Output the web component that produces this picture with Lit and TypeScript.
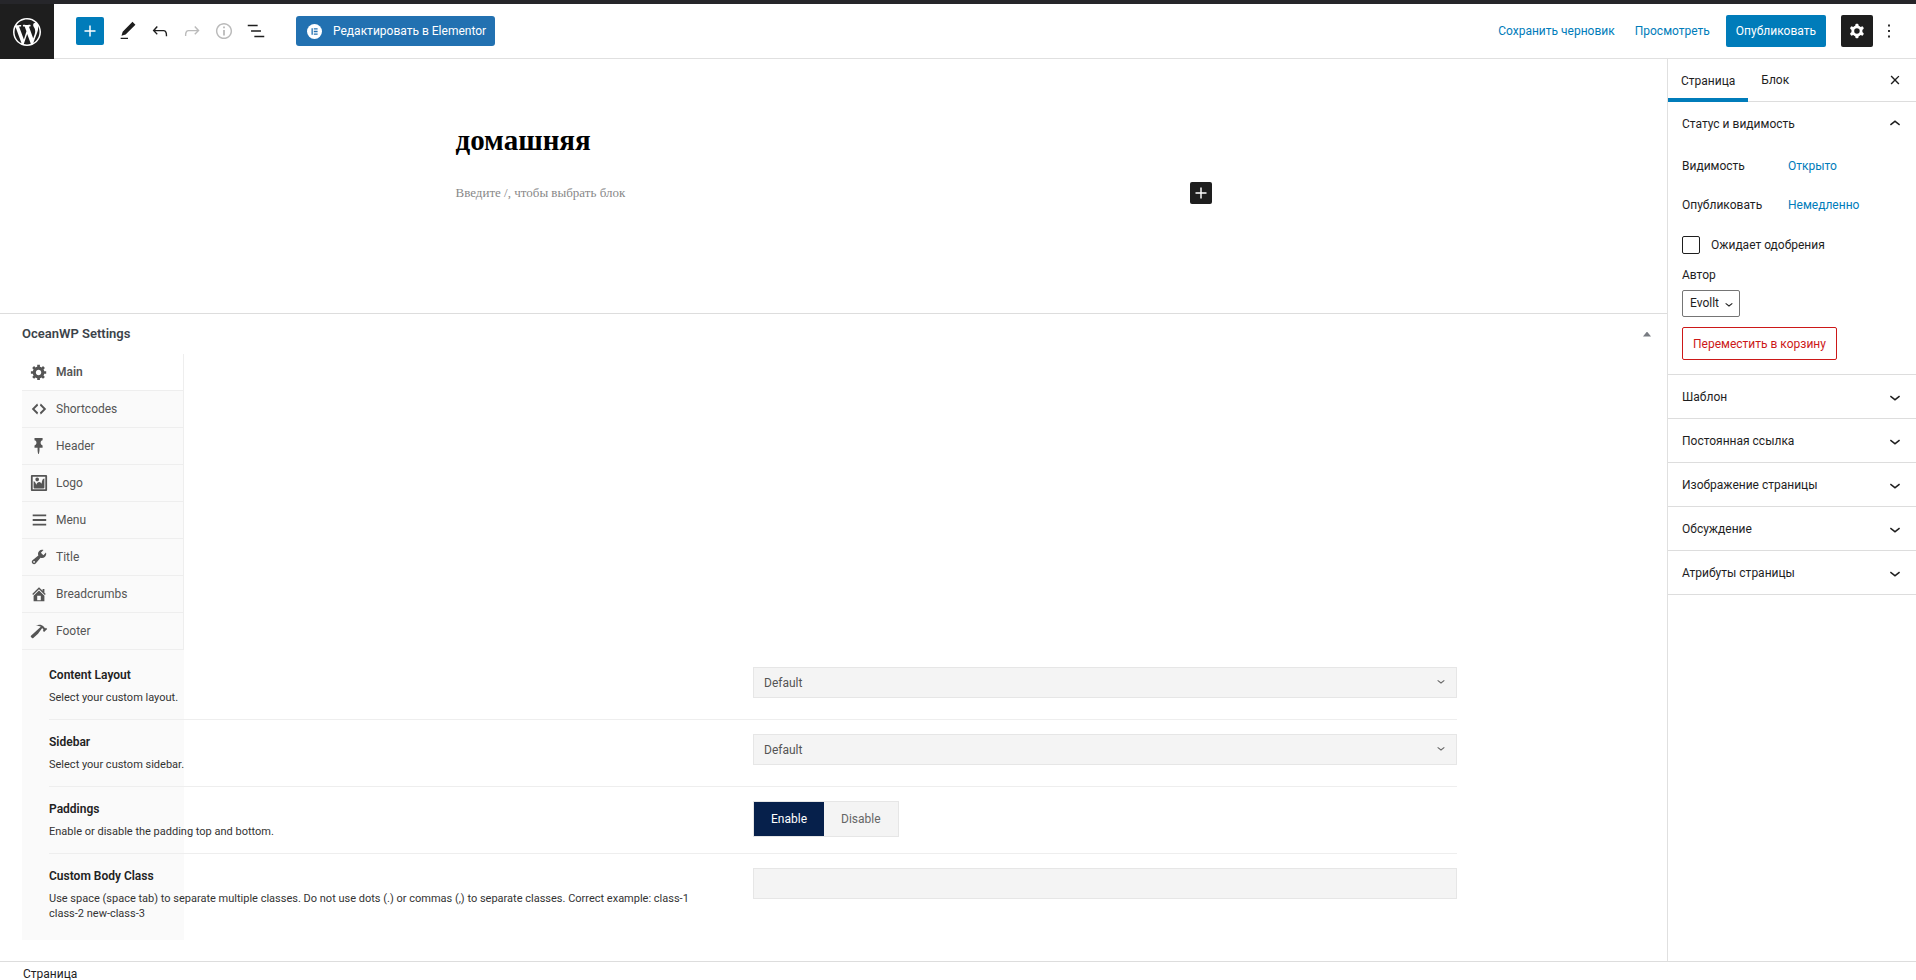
import { LitElement, html, css, svg } from "lit";
import { customElement, property, state } from "lit/decorators.js";

const icons: Record<string, string> = {
  plus: "M18 11.2h-5.2V6h-1.6v5.2H6v1.6h5.2V18h1.6v-5.2H18z",
  pencil: "M20.1 5.1L16.9 2 6.2 12.7l-1.3 4.4 4.5-1.3L20.1 5.1zM4 20.8h8v-1.5H4v1.5z",
  undo: "M18.3 11.7c-.6-.6-1.4-.9-2.3-.9H6.7l2.9-3.3-1.1-1-4.5 5L8.5 16l1-1-2.7-2.7H16c.5 0 .9.2 1.3.5 1 1 1 3.4 1 4.5v.3h1.5v-.2c0-1.5 0-4.3-1.5-5.7z",
  redo: "M15.6 6.5l-1.1 1 2.9 3.3H8c-.9 0-1.7.3-2.3.9-1.4 1.5-1.4 4.2-1.4 5.6v.2h1.5v-.3c0-1.1 0-3.5 1-4.5.3-.3.7-.5 1.3-.5h9.2L14.5 15l1.1 1.1 4.6-4.6-4.6-5z",
  info: "M12 3.2c-4.8 0-8.8 3.9-8.8 8.8 0 4.8 3.9 8.8 8.8 8.8 4.8 0 8.8-3.9 8.8-8.8 0-4.8-4-8.8-8.8-8.8zm0 16c-4 0-7.2-3.3-7.2-7.2C4.8 8 8 4.8 12 4.8s7.2 3.3 7.2 7.2c0 4-3.2 7.2-7.2 7.2zM11 17h2v-6h-2v6zm0-8h2V7h-2v2z",
  outline: "M13.8 5.2H3v1.5h10.8V5.2zm-3.6 12v1.5H21v-1.5H10.2zm7.2-6H6.6v1.5h10.8v-1.5z",
  cog: "M10.289 4.836A1 1 0 0111.275 4h1.306a1 1 0 01.987.836l.244 1.466c.787.26 1.503.679 2.108 1.218l1.393-.522a1 1 0 011.216.437l.653 1.13a1 1 0 01-.23 1.273l-1.148.944a6.025 6.025 0 010 2.435l1.149.946a1 1 0 01.23 1.272l-.653 1.13a1 1 0 01-1.216.437l-1.394-.522c-.605.54-1.32.958-2.108 1.218l-.244 1.466a1 1 0 01-.987.836h-1.306a1 1 0 01-.986-.836l-.244-1.466a5.995 5.995 0 01-2.108-1.218l-1.394.522a1 1 0 01-1.217-.436l-.653-1.131a1 1 0 01.23-1.272l1.149-.946a6.026 6.026 0 010-2.435l-1.148-.944a1 1 0 01-.23-1.272l.653-1.131a1 1 0 011.217-.437l1.393.522a5.994 5.994 0 012.108-1.218l.244-1.466zM14.929 12a3 3 0 11-6 0 3 3 0 016 0z",
  more: "M13 19h-2v-2h2v2zm0-6h-2v-2h2v2zm0-6h-2V5h2v2z",
  close: "M12 13.06l3.712 3.713 1.061-1.06L13.061 12l3.712-3.712-1.06-1.06L12 10.938 8.288 7.227l-1.061 1.06L10.939 12l-3.712 3.712 1.06 1.061L12 13.061z",
  down: "M17.5 11.6L12 16l-5.5-4.4.9-1.2L12 14l4.5-3.6 1 1.2z",
  up: "M6.5 12.4L12 8l5.5 4.4-.9 1.2L12 10l-4.5 3.6-1-1.2z",
};

const dashicons: Record<string, string> = {
  wordpress: "M20 10c0-5.51-4.49-10-10-10C4.48 0 0 4.49 0 10c0 5.52 4.48 10 10 10 5.51 0 10-4.48 10-10zM7.78 15.37L4.37 6.22c.55-.02 1.17-.08 1.17-.08.5-.06.44-1.13-.06-1.11 0 0-1.45.11-2.37.11-.18 0-.37 0-.58-.01C4.12 2.69 6.87 1.11 10 1.11c2.33 0 4.45.87 6.05 2.34-.68-.11-1.65.39-1.65 1.58 0 .74.45 1.36.9 2.1.35.61.55 1.36.55 2.46 0 1.49-1.4 5-1.4 5l-3.03-8.37c.54-.02.82-.17.82-.17.5-.05.44-1.25-.06-1.22 0 0-1.44.12-2.38.12-.87 0-2.33-.12-2.33-.12-.5-.03-.56 1.2-.06 1.22l.92.08 1.26 3.41zM17.41 10c.24-.64.74-1.87.43-4.25.7 1.29 1.05 2.71 1.05 4.25 0 3.29-1.73 6.24-4.4 7.78.97-2.59 1.94-5.2 2.92-7.78zM6.1 18.09C3.12 16.65 1.11 13.53 1.11 10c0-1.3.23-2.48.72-3.59C3.25 10.3 4.67 14.2 6.1 18.09zm4.03-6.63l2.58 6.98c-.86.29-1.76.45-2.71.45-.79 0-1.57-.11-2.29-.33.81-2.38 1.62-4.74 2.42-7.10z",
  generic: "M18 12h-2.18c-.17.7-.44 1.35-.81 1.93l1.54 1.54-2.1 2.1-1.54-1.54c-.58.36-1.23.63-1.91.79V19H8v-2.18c-.68-.16-1.33-.43-1.91-.79l-1.54 1.54-2.12-2.12 1.54-1.54c-.36-.58-.63-1.23-.79-1.91H1V9.03h2.17c.16-.7.44-1.35.8-1.94L2.43 5.55l2.1-2.1 1.54 1.54c.58-.37 1.24-.64 1.93-.81V2h3v2.18c.68.16 1.33.43 1.91.79l1.54-1.54 2.12 2.12-1.54 1.54c.36.59.64 1.24.8 1.94H18V12zm-8.5 1.5c1.66 0 3-1.34 3-3s-1.34-3-3-3-3 1.34-3 3 1.34 3 3 3z",
  code: "M9 6l-4 4 4 4-1 2-6-6 6-6zm2 8l4-4-4-4 1-2 6 6-6 6z",
  pin: "M5 3.61V1.04l8.99-.01-.01 2.58c-1.22.26-2.16 1.35-2.16 2.67v.5c.01 1.31.93 2.4 2.17 2.66l-.01 2.58h-3.41l-.01 2.57c0 .6-.47 4.41-1.06 4.41-.6 0-1.08-3.81-1.08-4.41v-2.56L5 12.02l.01-2.58c1.23-.25 2.15-1.35 2.15-2.66v-.5c0-1.31-.92-2.41-2.16-2.67z",
  image: "M2.25 1h15.5c.69 0 1.25.56 1.25 1.25v15.5c0 .69-.56 1.25-1.25 1.25H2.25C1.56 19 1 18.44 1 17.75V2.25C1 1.56 1.56 1 2.25 1zM17 17V3H3v14h14zM10 6c0-1.1-.9-2-2-2s-2 .9-2 2 .9 2 2 2 2-.9 2-2zm3 5s0-6 3-6v10c0 .55-.45 1-1 1H5c-.55 0-1-.45-1-1V8c2 0 3 4 3 4s1-3 3-3 3 2 3 2z",
  menu: "M18 5.800V3.800H3v2h15zm0 5.200V9H3v2h15zm0 5.200v-2H3v2h15z",
  wrench: "M16.68 9.77c-1.34 1.34-3.3 1.67-4.95.99l-5.41 6.52c-.99.99-2.59.99-3.58 0s-.99-2.59 0-3.57l6.52-5.42c-.68-1.65-.35-3.61.99-4.95 1.28-1.28 3.12-1.62 4.72-1.06l-2.89 2.89 2.82 2.82 2.86-2.87c.53 1.58.18 3.39-1.08 4.65zM3.81 16.21c.4.39 1.04.39 1.43 0 .4-.4.4-1.04 0-1.43-.39-.4-1.03-.4-1.43 0-.39.39-.39 1.03 0 1.43z",
  home: "M16 8.5l1.53 1.53-1.06 1.06L10 4.6l-6.47 6.49-1.06-1.06L10 2.5l4 4v-2h2v4zm-6-2.46l6 5.99V18H4v-5.97zM12 17v-5H8v5h4z",
  hammer: "M17.7 6.32l1.41 1.42-3.47 3.41-1.42-1.42.84-.82c-.32-.76-.81-1.57-1.51-2.31l-4.61 6.59-5.26 4.7c-.39.39-1.02.39-1.42 0l-1.2-1.21c-.39-.39-.39-1.02 0-1.41l10.97-9.92c-1.37-.86-3.21-1.46-5.67-1.48 2.7-.82 4.95-.93 6.58-.3 1.7.66 2.82 2.2 3.91 3.58z",
};

const shared = css`
  *, *::before, *::after { box-sizing: border-box; }
  button, input, select { font: inherit; color: inherit; margin: 0; }
  button { padding: 0; border: 0; background: none; cursor: pointer; }
  h1, h2, h3, p, ul { margin: 0; padding: 0; font-size: inherit; font-weight: inherit; }
  ul { list-style: none; }
  a { color: inherit; text-decoration: none; }
`;

@customElement("wp-icon")
class WpIcon extends LitElement {
  @property() name = "";
  static styles = css`
    :host { display: block; width: 22px; height: 22px; flex: none; }
    svg { display: block; width: 100%; height: 100%; fill: currentColor; fill-rule: evenodd; }
  `;
  render() {
    const dash = this.name in dashicons;
    return html`<svg viewBox=${dash ? "0 0 20 20" : "0 0 24 24"} aria-hidden="true">
      ${svg`<path d=${dash ? dashicons[this.name] : icons[this.name]}></path>`}
    </svg>`;
  }
}

@customElement("editor-header")
class EditorHeader extends LitElement {
  static styles = [shared, css`
    :host { display: flex; align-items: center; height: 55px; border-bottom: 1px solid #e0e0e0; background: #fff; }
    .home { align-self: stretch; width: 54px; margin-bottom: -1px; display: grid; place-items: center; background: #1e1e1e; color: #fff; }
    .home wp-icon { width: 28px; height: 28px; }
    .tools { display: flex; align-items: center; gap: 10px; margin-left: 22px; }
    .add { width: 28px; height: 28px; margin-right: 3px; display: grid; place-items: center; border-radius: 2px; background: #007cba; color: #fff; }
    .off { color: #bbb; }
    .elementor { display: flex; align-items: center; gap: 11px; height: 30px; margin-left: 19px; padding: 0 9px 0 11px; border-radius: 3px; background: #2271b1; color: #fff; }
    .mark { width: 15px; height: 15px; display: block; }
    .actions { display: flex; align-items: center; margin-left: auto; color: #007cba; }
    .link { margin-right: 20px; }
    .publish { height: 32px; margin: 0 15px 0 -4px; padding: 0 10px; border-radius: 2px; background: #007cba; color: #fff; }
    .settings { width: 32px; height: 32px; display: grid; place-items: center; border-radius: 2px; background: #1e1e1e; color: #fff; }
    .more { margin: 0 16px 0 5px; color: #1e1e1e; }
  `];
  render() {
    return html`
      <a class="home" href="#" aria-label="WordPress"><wp-icon name="wordpress"></wp-icon></a>
      <div class="tools">
        <button class="add" aria-label="Добавить блок"><wp-icon name="plus"></wp-icon></button>
        <button aria-label="Инструменты"><wp-icon name="pencil"></wp-icon></button>
        <button aria-label="Отменить"><wp-icon name="undo"></wp-icon></button>
        <button class="off" aria-label="Повторить"><wp-icon name="redo"></wp-icon></button>
        <button class="off" aria-label="Подробности"><wp-icon name="info"></wp-icon></button>
        <button aria-label="Структура"><wp-icon name="outline"></wp-icon></button>
        <button class="elementor">
          <svg class="mark" viewBox="0 0 15 15" aria-hidden="true">
            <circle cx="7.5" cy="7.5" r="7.5" fill="#fff"></circle>
            <path d="M4.500 4.300h1.300v6.400H4.500zM6.800 4.300h3.800v1.300H6.800zM6.800 6.850h3.800v1.300H6.800zM6.800 9.400h3.800v1.300H6.800z" fill="#2271b1"></path>
          </svg>
          Редактировать в Elementor
        </button>
      </div>
      <div class="actions">
        <button class="link">Сохранить черновик</button>
        <button class="link">Просмотреть</button>
        <button class="publish">Опубликовать</button>
        <button class="settings" aria-label="Настройки"><wp-icon name="cog"></wp-icon></button>
        <button class="more" aria-label="Опции"><wp-icon name="more"></wp-icon></button>
      </div>
    `;
  }
}

@customElement("ocean-settings")
class OceanSettings extends LitElement {
  @state() tab = "Main";
  tabs = [
    ["generic", "Main"], ["code", "Shortcodes"], ["pin", "Header"], ["image", "Logo"],
    ["menu", "Menu"], ["wrench", "Title"], ["home", "Breadcrumbs"], ["hammer", "Footer"],
  ];
  static styles = [shared, css`
    :host { display: block; padding: 0 0 21px 22px; border-top: 1px solid #ddd; }
    .head { display: flex; align-items: center; justify-content: space-between; height: 40px; padding-right: 16px; }
    .head h2 { font-size: 13px; font-weight: 600; color: #3c434a; }
    .toggle { width: 8px; height: 5px; background: #787c82; clip-path: polygon(50% 0, 100% 100%, 0 100%); }
    .panel { background: linear-gradient(#fafafa, #fafafa) 0 0 / 162px 100% no-repeat; }
    .tabs { width: 162px; border-right: 1px solid #eee; }
    .tab { display: flex; align-items: center; gap: 8px; width: 100%; height: 37px; padding: 0 8px; border-bottom: 1px solid #eee; color: #555; }
    .tab wp-icon { width: 18px; height: 18px; }
    .tab.on { background: #fff; font-weight: 600; }
    .fields { padding: 3px 210px 5px 27px; }
    .row { display: grid; grid-template-columns: 1fr 1fr; padding: 14px 0; }
    .row + .row { border-top: 1px solid #eee; }
    .text { padding-right: 48px; color: #333; }
    .text label, .name { display: block; font-weight: 600; line-height: 16px; margin-bottom: 7px; color: #222; }
    .text p { font-size: 11px; line-height: 15px; }
    .pick { display: grid; align-items: center; }
    .pick select, .pick wp-icon { grid-area: 1 / 1; }
    .pick wp-icon { justify-self: end; width: 16px; height: 16px; margin: 0 8px 4px 0; color: #666; pointer-events: none; }
    .box { appearance: none; width: 100%; height: 31px; padding: 0 10px; border: 1px solid #e6e6e6; border-radius: 0; background: #f4f4f4; color: #555; }
    .switch { display: inline-flex; vertical-align: top; border: 1px solid #e6e6e6; background: #f4f4f4; color: #666; }
    .switch label { display: grid; place-items: center; height: 34px; padding: 0 17px; cursor: pointer; }
    .switch input { appearance: none; position: absolute; width: 0; height: 0; }
    .switch label:has(input:checked) { background: #06204b; color: #fff; }
  `];
  select(id: string) {
    return html`<div class="pick">
      <select class="box" id=${id}><option>Default</option></select>
      <wp-icon name="down"></wp-icon>
    </div>`;
  }
  render() {
    return html`
      <div class="head">
        <h2>OceanWP Settings</h2>
        <button class="toggle" aria-label="Свернуть"></button>
      </div>
      <div class="panel">
        <ul class="tabs">
          ${this.tabs.map(([icon, label]) => html`<li>
            <button class="tab ${this.tab === label ? "on" : ""}" @click=${() => (this.tab = label)}>
              <wp-icon name=${icon}></wp-icon>${label}
            </button></li>`)}
        </ul>
        <div class="fields">
          <div class="row">
            <div class="text"><label for="layout">Content Layout</label><p>Select your custom layout.</p></div>
            <div>${this.select("layout")}</div>
          </div>
          <div class="row">
            <div class="text"><label for="sidebar">Sidebar</label><p>Select your custom sidebar.</p></div>
            <div>${this.select("sidebar")}</div>
          </div>
          <div class="row">
            <div class="text"><h3 class="name" id="pad">Paddings</h3><p>Enable or disable the padding top and bottom.</p></div>
            <div><div class="switch" role="radiogroup" aria-labelledby="pad">
              <label><input type="radio" name="pad" checked />Enable</label>
              <label><input type="radio" name="pad" />Disable</label>
            </div></div>
          </div>
          <div class="row">
            <div class="text"><label for="body-class">Custom Body Class</label><p>Use space (space tab) to separate multiple classes. Do not use dots (.) or commas (,) to separate classes. Correct example: class-1 class-2 new-class-3</p></div>
            <div><input class="box" id="body-class" type="text" /></div>
          </div>
        </div>
      </div>
    `;
  }
}

@customElement("editor-sidebar")
class EditorSidebar extends LitElement {
  panels = ["Шаблон", "Постоянная ссылка", "Изображение страницы", "Обсуждение", "Атрибуты страницы"];
  static styles = [shared, css`
    :host { display: block; width: 249px; border-left: 1px solid #e0e0e0; background: #fff; }
    .tabs { display: flex; height: 43px; border-bottom: 1px solid #ddd; }
    .tab { padding: 0 13px; }
    .tab.on { margin-bottom: -1px; box-shadow: inset 0 -4px #007cba; }
    .close { margin: 0 10px 0 auto; }
    .section { display: flex; align-items: center; justify-content: space-between; width: 100%; height: 43px; padding: 0 10px 0 14px; }
    .panel { border-bottom: 1px solid #ddd; }
    .body { padding: 5px 14px 14px; }
    .pair { display: grid; grid-template-columns: 106px 1fr; align-items: center; justify-items: start; height: 32px; margin-bottom: 7px; }
    .pair button { color: #007cba; }
    .check { display: flex; align-items: center; gap: 11px; margin: 15px 0 12px; }
    .check input { appearance: none; width: 18px; height: 18px; border: 1px solid #1e1e1e; border-radius: 2px; }
    .author { display: block; line-height: 18px; margin-bottom: 6px; }
    .pick { display: inline-grid; align-items: center; vertical-align: top; }
    .pick select, .pick wp-icon { grid-area: 1 / 1; }
    .pick wp-icon { justify-self: end; width: 16px; height: 16px; margin-right: 3px; pointer-events: none; }
    .pick select { appearance: none; height: 27px; padding: 0 20px 2px 7px; border: 1px solid #757575; border-radius: 2px; background: #fff; }
    .trash { display: block; height: 33px; margin-top: 10px; padding: 0 10px; border: 1px solid #cc1818; border-radius: 2px; color: #cc1818; }
  `];
  render() {
    return html`
      <div class="tabs">
        <button class="tab on">Страница</button>
        <button class="tab">Блок</button>
        <button class="close" aria-label="Закрыть"><wp-icon name="close"></wp-icon></button>
      </div>
      <div class="panel">
        <button class="section">Статус и видимость<wp-icon name="up"></wp-icon></button>
        <div class="body">
          <div class="pair"><span>Видимость</span><button>Открыто</button></div>
          <div class="pair"><span>Опубликовать</span><button>Немедленно</button></div>
          <label class="check"><input type="checkbox" />Ожидает одобрения</label>
          <label class="author" for="author">Автор</label>
          <div class="pick">
            <select id="author"><option>Evollt</option></select>
            <wp-icon name="down"></wp-icon>
          </div>
          <button class="trash">Переместить в корзину</button>
        </div>
      </div>
      ${this.panels.map((label) => html`<div class="panel">
        <button class="section">${label}<wp-icon name="down"></wp-icon></button>
      </div>`)}
    `;
  }
}

@customElement("app-root")
class AppRoot extends LitElement {
  static styles = [shared, css`
    :host { display: flex; flex-direction: column; min-height: 100vh; font: 12px/16px Roboto, "Noto Sans", sans-serif; color: #1e1e1e; background: #fff; border-top: 4px solid #26262a; box-sizing: border-box; }
    .middle { display: flex; flex: 1; }
    .main { display: flex; flex-direction: column; flex: 1; min-width: 0; }
    .canvas { flex: 1; padding: 61px 20px 0; font-family: "Liberation Serif", serif; }
    .post { max-width: 756px; margin: 0 auto; }
    .post h1 { font-size: 29px; line-height: 40px; font-weight: 700; color: #000; }
    .block { display: flex; align-items: center; justify-content: space-between; margin-top: 22px; }
    .block p { font-size: 13px; color: #888; }
    .insert { width: 22px; height: 22px; border-radius: 2px; background: #1e1e1e; color: #fff; }
    .footer { height: 19px; padding: 4px 23px 0; border-top: 1px solid #ddd; line-height: 16px; }
  `];
  render() {
    return html`
      <editor-header></editor-header>
      <div class="middle">
        <main class="main">
          <div class="canvas">
            <div class="post">
              <h1>домашняя</h1>
              <div class="block">
                <p>Введите /, чтобы выбрать блок</p>
                <button class="insert" aria-label="Добавить блок"><wp-icon name="plus"></wp-icon></button>
              </div>
            </div>
          </div>
          <ocean-settings></ocean-settings>
        </main>
        <editor-sidebar></editor-sidebar>
      </div>
      <footer class="footer">Страница</footer>
    `;
  }
}
